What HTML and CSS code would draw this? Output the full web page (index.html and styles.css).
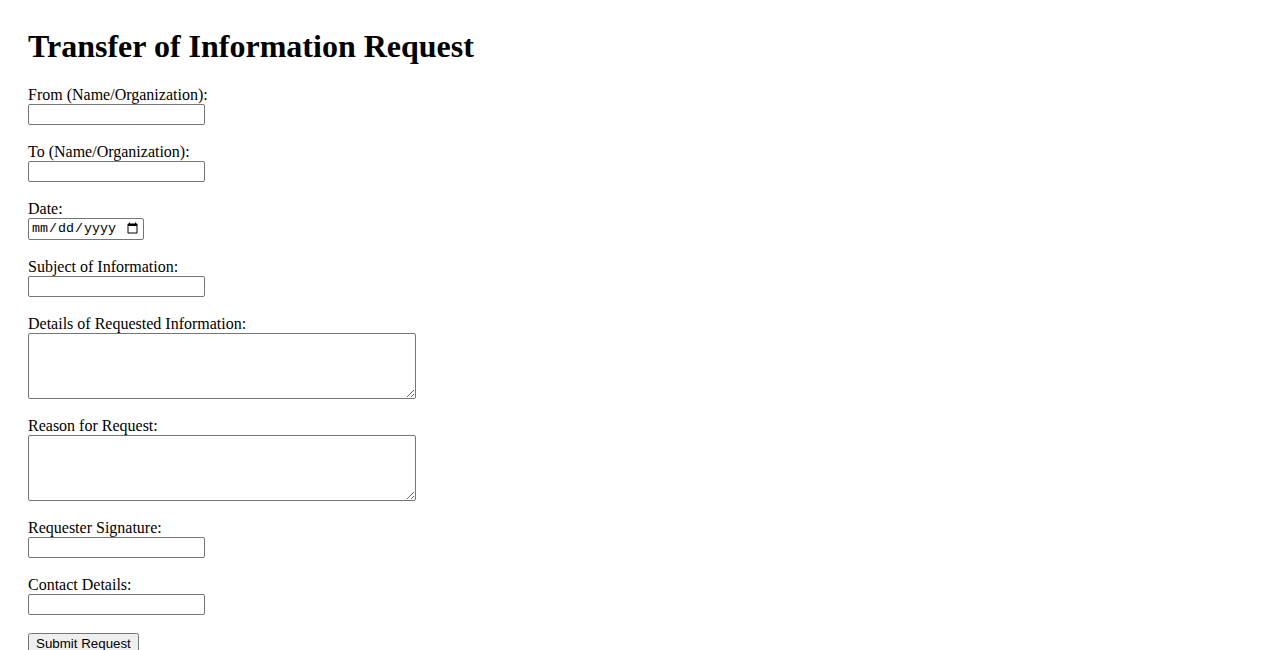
FILE: index.html
```html
<!DOCTYPE html>
<html lang="en">
<head>
    <meta charset="UTF-8">
    <meta name="viewport" content="width=device-width, initial-scale=1.0">
    <title>Transfer of Information Request</title>
    <link rel="stylesheet" href="styles.css">
</head>
<body>
    <div class="page">
        <h1 class="title">Transfer of Information Request</h1>
        <form class="request-form">
            <div class="field">
                <label for="from">From (Name/Organization):</label>
                <input type="text" id="from" name="from" class="text-in">
            </div>
            <div class="field">
                <label for="to">To (Name/Organization):</label>
                <input type="text" id="to" name="to" class="text-in">
            </div>
            <div class="field">
                <label for="date">Date:</label>
                <input type="date" id="date" name="date" class="date-in">
            </div>
            <div class="field">
                <label for="subject">Subject of Information:</label>
                <input type="text" id="subject" name="subject" class="text-in">
            </div>
            <div class="field">
                <label for="details">Details of Requested Information:</label>
                <textarea id="details" name="details" class="area-in"></textarea>
            </div>
            <div class="field">
                <label for="reason">Reason for Request:</label>
                <textarea id="reason" name="reason" class="area-in"></textarea>
            </div>
            <div class="field">
                <label for="signature">Requester Signature:</label>
                <input type="text" id="signature" name="signature" class="text-in">
            </div>
            <div class="field">
                <label for="contact">Contact Details:</label>
                <input type="text" id="contact" name="contact" class="text-in">
            </div>
            <button type="submit" class="submit-btn">Submit Request</button>
        </form>
    </div>
</body>
</html>
```

FILE: styles.css
```css
body{
    margin: 8px;
    font-family: "Liberation Serif", "Times New Roman", serif;
    font-size: 16px;
    color: #000;
}
.page{
    padding: 20px;
}
.title{
    margin: 0 0 21px;
    font-size: 32px;
    font-weight: bold;
}
.field{
    margin-bottom: 18px;
}
.field label{
    display: block;
}
.text-in, .date-in, .area-in{
    display: block;
    box-sizing: border-box;
    margin: 0;
    border: 1px solid #767676;
    border-radius: 2px;
}
.text-in{
    width: 177px;
    height: 21px;
    padding: 1px 2px;
    font-family: "Liberation Sans", Arial, sans-serif;
    font-size: 13.33px;
}
.date-in{
    width: 116px;
    height: 22px;
    padding: 1px 2px;
    font-family: "Liberation Mono", "Courier New", monospace;
    font-size: 13.33px;
}
.area-in{
    width: 388px;
    height: 66px;
    padding: 2px;
    font-family: "Liberation Mono", monospace;
    font-size: 13.33px;
}
.submit-btn{
    margin: 0;
    font-family: "Liberation Sans", Arial, sans-serif;
    font-size: 13.33px;
}
```
